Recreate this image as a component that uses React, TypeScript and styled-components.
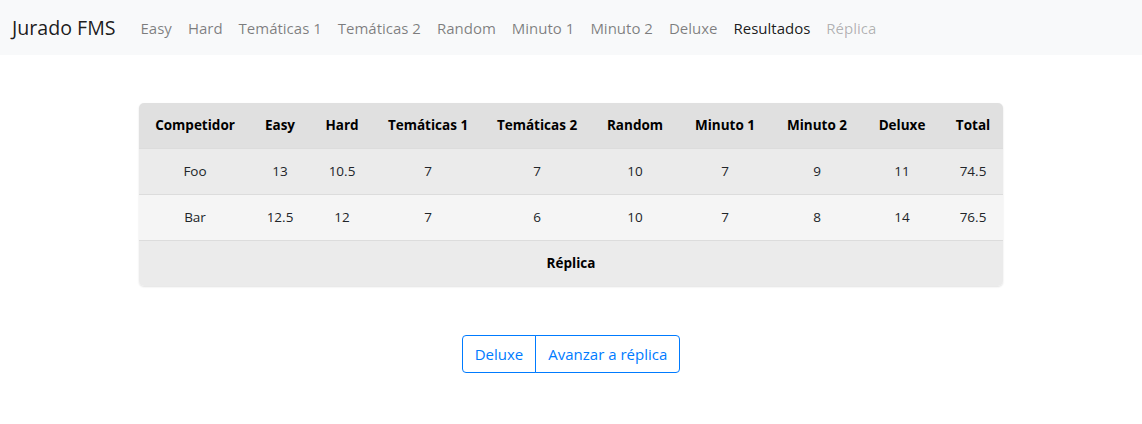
import React from "react";
import styled, { createGlobalStyle } from "styled-components";

const Global = createGlobalStyle`
  html, body { margin: 0; padding: 0; background: #fff; }
  body {
    font-family: "Open Sans", "Noto Sans", "Liberation Sans", sans-serif;
    font-size: 15px;
    line-height: 1.5;
    color: #212529;
  }
  * { box-sizing: border-box; }
`;

const Navbar = styled.nav`
  display: flex;
  align-items: center;
  height: 55px;
  padding: 0 16px 0 12px;
  background: #f8f9fa;
`;

const Brand = styled.a`
  font-size: 19.6px;
  line-height: 30px;
  color: rgba(0, 0, 0, 0.9);
  margin-right: 17px;
  text-decoration: none;
`;

const NavList = styled.div`
  display: flex;
  align-items: center;
`;

const NavLink = styled.a<{ $state?: "active" | "disabled" }>`
  padding: 8px 8px;
  font-size: 15px;
  line-height: 24px;
  text-decoration: none;
  color: ${(p) =>
    p.$state === "active"
      ? "rgba(0,0,0,0.9)"
      : p.$state === "disabled"
      ? "rgba(0,0,0,0.3)"
      : "rgba(0,0,0,0.5)"};
`;

const Main = styled.main`
  display: flex;
  flex-direction: column;
  align-items: center;
  padding-top: 48px;
`;

const TableCard = styled.div`
  width: 864px;
  border-radius: 5px;
  overflow: hidden;
  box-shadow: 0 1px 2px rgba(0, 0, 0, 0.12);
`;

const Table = styled.table`
  width: 100%;
  border-collapse: collapse;
  table-layout: fixed;
  font-size: 13.5px;
  line-height: 21px;
  color: #212529;
`;

const HeadRow = styled.tr`
  background: #e0e0e0;
`;

const Th = styled.th`
  padding: 12px 0;
  font-weight: 700;
  color: #000;
  text-align: center;
`;

const Row = styled.tr<{ $bg: string }>`
  background: ${(p) => p.$bg};
  border-top: 1px solid #dcdcdc;
`;

const Td = styled.td<{ $bold?: boolean }>`
  padding: 12px 0;
  text-align: center;
  font-weight: ${(p) => (p.$bold ? 700 : 400)};
  color: ${(p) => (p.$bold ? "#000" : "#212529")};
`;

const ButtonGroup = styled.div`
  display: inline-flex;
  margin-top: 49px;
`;

const Button = styled.button<{ $pos: "first" | "last" }>`
  font-family: inherit;
  font-size: 15px;
  line-height: 24px;
  padding: 6px 12px;
  background: transparent;
  color: #007bff;
  border: 1px solid #007bff;
  border-radius: ${(p) => (p.$pos === "first" ? "4px 0 0 4px" : "0 4px 4px 0")};
  margin-left: ${(p) => (p.$pos === "last" ? "-1px" : "0")};
  cursor: pointer;
`;

const widths = [112, 58, 66, 106, 112, 84, 96, 88, 82, 60];
const headers = [
  "Competidor",
  "Easy",
  "Hard",
  "Temáticas 1",
  "Temáticas 2",
  "Random",
  "Minuto 1",
  "Minuto 2",
  "Deluxe",
  "Total",
];
const rows = [
  { bg: "#ebebeb", cells: ["Foo", "13", "10.5", "7", "7", "10", "7", "9", "11", "74.5"] },
  { bg: "#f5f5f5", cells: ["Bar", "12.5", "12", "7", "6", "10", "7", "8", "14", "76.5"] },
];

const links = ["Easy", "Hard", "Temáticas 1", "Temáticas 2", "Random", "Minuto 1", "Minuto 2", "Deluxe"];

export default function App() {
  return (
    <>
      <Global />
      <Navbar>
        <Brand href="#">Jurado FMS</Brand>
        <NavList>
          {links.map((l) => (
            <NavLink key={l} href="#">
              {l}
            </NavLink>
          ))}
          <NavLink href="#" $state="active">
            Resultados
          </NavLink>
          <NavLink href="#" $state="disabled">
            Réplica
          </NavLink>
        </NavList>
      </Navbar>
      <Main>
        <TableCard>
          <Table>
            <colgroup>
              {widths.map((w, i) => (
                <col key={i} style={{ width: w }} />
              ))}
            </colgroup>
            <thead>
              <HeadRow>
                {headers.map((h) => (
                  <Th key={h}>{h}</Th>
                ))}
              </HeadRow>
            </thead>
            <tbody>
              {rows.map((r, i) => (
                <Row key={i} $bg={r.bg}>
                  {r.cells.map((c, j) => (
                    <Td key={j}>{c}</Td>
                  ))}
                </Row>
              ))}
              <Row $bg="#ebebeb">
                <Td colSpan={10} $bold>
                  Réplica
                </Td>
              </Row>
            </tbody>
          </Table>
        </TableCard>
        <ButtonGroup>
          <Button $pos="first">Deluxe</Button>
          <Button $pos="last">Avanzar a réplica</Button>
        </ButtonGroup>
      </Main>
    </>
  );
}
